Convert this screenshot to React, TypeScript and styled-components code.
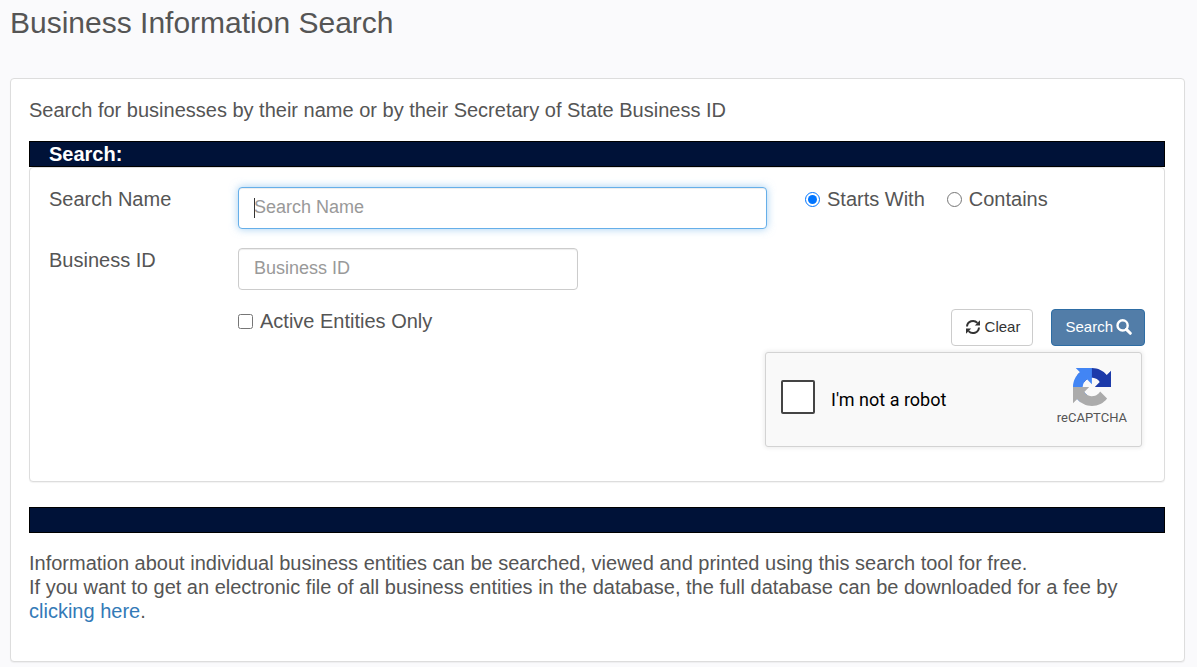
import React, { useState } from "react";
import styled, { createGlobalStyle, css } from "styled-components";

const GlobalStyle = createGlobalStyle`
  *, *::before, *::after { box-sizing: border-box; }
  body {
    margin: 0;
    background: #fafafc;
    color: #555;
    font-family: "Liberation Sans", Arial, Helvetica, sans-serif;
    font-size: 20px;
    line-height: 24px;
  }
`;

const Page = styled.main`
  padding: 5px 12px 5px 10px;
`;

const Title = styled.h1`
  margin: 0 0 37px;
  font-size: 30px;
  line-height: 36px;
  font-weight: 400;
`;

const panel = css`
  background: #fff;
  border: 1px solid #ddd;
  border-radius: 4px;
  box-shadow: 0 1px 1px rgba(0, 0, 0, 0.05);
`;

const Card = styled.section`
  ${panel}
  padding: 19px 19px 38px 18px;
`;

const Text = styled.p`
  margin: 0;
`;

const Bar = styled.h2`
  margin: 0;
  height: 26px;
  padding: 0 19px;
  background: #001238;
  border: 1px solid #000;
  color: #fff;
  font-size: 20px;
  line-height: 24px;
`;

const Intro = styled(Text)`
  margin-bottom: 19px;
`;

const SearchForm = styled.form`
  ${panel}
  margin-bottom: 25px;
  padding: 19px 19px 34px;
`;

const Row = styled.div`
  display: grid;
  grid-template-columns: repeat(12, 1fr);
  column-gap: 38px;
  margin-bottom: 19px;
`;

const FieldLabel = styled.label`
  grid-column: span 2;
`;

const Field = styled.div<{ $span: number }>`
  grid-column: span ${(p) => p.$span};
  position: relative;
`;

const TextInput = styled.input<{ $active?: boolean }>`
  display: block;
  width: 100%;
  height: 42px;
  padding: 0 15px 2px;
  border: 1px solid ${(p) => (p.$active ? "#66afe9" : "#ccc")};
  border-radius: 4px;
  outline: 0;
  background: #fff;
  box-shadow: inset 0 1px 1px rgba(0, 0, 0, 0.075)${(p) => (p.$active ? ", 0 0 8px rgba(102, 175, 233, 0.6)" : "")};
  color: #555;
  font: 18px "Liberation Sans", Arial, sans-serif;
  &::placeholder { color: #999; opacity: 1; }
`;

const Caret = styled.span`
  position: absolute;
  left: 16px;
  top: 11px;
  width: 1px;
  height: 20px;
  background: #333;
`;

const Choices = styled.div`
  grid-column: span 4;
  display: flex;
  align-items: flex-start;
  gap: 22px;
`;

const Choice = styled.label`
  display: flex;
  align-items: center;
  gap: 7px;
  white-space: nowrap;
  input {
    width: 15px;
    height: 15px;
    margin: 1px 0 0;
  }
`;

const Actions = styled.div`
  display: flex;
  justify-content: space-between;
  align-items: flex-start;
  padding-left: 189px;
  margin-bottom: 6px;
`;

const ButtonGroup = styled.div`
  display: flex;
  gap: 18px;
`;

const Button = styled.button<{ $primary?: boolean }>`
  display: flex;
  align-items: center;
  gap: ${(p) => (p.$primary ? 3 : 4)}px;
  height: 37px;
  padding: 0 12px 2px 13px;
  border: 1px solid ${(p) => (p.$primary ? "#2e6da4" : "#ccc")};
  border-radius: 4px;
  background: ${(p) => (p.$primary ? "#527da8" : "#fff")};
  color: ${(p) => (p.$primary ? "#fff" : "#333")};
  font: 15px "Liberation Sans", Arial, sans-serif;
`;

const Captcha = styled.div`
  display: flex;
  align-items: center;
  width: 377px;
  height: 95px;
  margin: 0 3px 0 auto;
  padding: 0 14px 0 15px;
  border: 1px solid #d3d3d3;
  border-radius: 3px;
  background: #f9f9f9;
  box-shadow: 0 0 4px 1px rgba(0, 0, 0, 0.08);
  color: #000;
  font: 18px/24px Roboto, sans-serif;
`;

const RobotLabel = styled.label`
  display: flex;
  align-items: center;
  gap: 16px;
  flex: 1;
  padding-bottom: 6px;
  span { padding-top: 6px; }
`;

const RobotBox = styled.input`
  appearance: none;
  width: 34px;
  height: 34px;
  margin: 0;
  border: 2px solid #444;
  border-radius: 2px;
  background: #fff;
`;

const Brand = styled.div`
  display: flex;
  flex-direction: column;
  align-items: center;
  gap: 2px;
  padding-bottom: 4px;
  color: #555;
  font-size: 13px;
  line-height: 20px;
`;

const Info = styled(Text)`
  margin-top: 18px;
`;

const Link = styled.a`
  color: #337ab7;
  text-decoration: none;
`;

function RefreshIcon() {
  return (
    <svg width="16" height="16" viewBox="0 0 16 16" fill="none" stroke="currentColor" strokeWidth="2" aria-hidden="true">
      <path d="M2 7.5A6 6 0 0 1 12.4 3.9" />
      <path d="M14 8.5A6 6 0 0 1 3.6 12.1" />
      <path d="M15 1.2v5.2H9.8z" fill="currentColor" stroke="none" />
      <path d="M1 14.8V9.6h5.2z" fill="currentColor" stroke="none" />
    </svg>
  );
}

function SearchIcon() {
  return (
    <svg width="16" height="16" viewBox="0 0 16 16" fill="none" stroke="currentColor" aria-hidden="true">
      <circle cx="6.6" cy="6.4" r="5.1" strokeWidth="2.4" />
      <path d="M10.4 10.4l3.9 3.9" strokeWidth="3" strokeLinecap="round" />
    </svg>
  );
}

function RecaptchaLogo() {
  return (
    <svg width="38" height="38" viewBox="0 0 64 64" aria-hidden="true">
      <path fill="#1c3aa9" d="M64 31.955l-.033-1.37V4.687l-7.16 7.16C50.948 4.674 42.033.093 32.05.093c-10.4 0-19.622 4.96-25.458 12.64l11.736 11.86a15.55 15.55 0 0 1 4.754-5.334c2.05-1.6 4.952-2.906 8.968-2.906.485 0 .86.057 1.135.163 4.976.393 9.288 3.14 11.828 7.124l-8.307 8.307L64 31.953" />
      <path fill="#4285f4" d="M31.862.094l-1.37.033H4.594l7.16 7.16C4.58 13.147 0 22.06 0 32.046c0 10.4 4.96 19.622 12.64 25.458L24.5 45.768a15.55 15.55 0 0 1-5.334-4.754c-1.6-2.05-2.906-4.952-2.906-8.968 0-.485.057-.86.163-1.135.393-4.976 3.14-9.288 7.124-11.828l8.307 8.307L31.86.095" />
      <path fill="#ababab" d="M.001 32.045l.033 1.37v25.898l7.16-7.16c5.86 7.173 14.774 11.754 24.76 11.754 10.4 0 19.622-4.96 25.458-12.64l-11.736-11.86a15.55 15.55 0 0 1-4.754 5.334c-2.05 1.6-4.952 2.906-8.968 2.906-.485 0-.86-.057-1.135-.163-4.976-.393-9.288-3.14-11.828-7.124l8.307-8.307c-10.522.04-22.4.066-27.295-.005" />
    </svg>
  );
}

export default function App() {
  const [mode, setMode] = useState("starts");
  const [name, setName] = useState("");
  return (
    <>
      <GlobalStyle />
      <Page>
        <Title>Business Information Search</Title>
        <Card>
          <Intro>Search for businesses by their name or by their Secretary of State Business ID</Intro>
          <Bar>Search:</Bar>
          <SearchForm onSubmit={(e) => e.preventDefault()} onReset={() => setName("")}>
            <Row>
              <FieldLabel htmlFor="name">Search Name</FieldLabel>
              <Field $span={6}>
                <TextInput id="name" $active placeholder="Search Name" value={name} onChange={(e) => setName(e.target.value)} />
                {name === "" && <Caret />}
              </Field>
              <Choices>
                <Choice>
                  <input type="radio" name="mode" checked={mode === "starts"} onChange={() => setMode("starts")} />
                  Starts With
                </Choice>
                <Choice>
                  <input type="radio" name="mode" checked={mode === "contains"} onChange={() => setMode("contains")} />
                  Contains
                </Choice>
              </Choices>
            </Row>
            <Row>
              <FieldLabel htmlFor="business-id">Business ID</FieldLabel>
              <Field $span={4}>
                <TextInput id="business-id" placeholder="Business ID" />
              </Field>
            </Row>
            <Actions>
              <Choice>
                <input type="checkbox" />
                Active Entities Only
              </Choice>
              <ButtonGroup>
                <Button type="reset"><RefreshIcon />Clear</Button>
                <Button type="submit" $primary>Search<SearchIcon /></Button>
              </ButtonGroup>
            </Actions>
            <Captcha>
              <RobotLabel>
                <RobotBox type="checkbox" />
                <span>I'm not a robot</span>
              </RobotLabel>
              <Brand>
                <RecaptchaLogo />
                reCAPTCHA
              </Brand>
            </Captcha>
          </SearchForm>
          <Bar as="div" />
          <Info>
            Information about individual business entities can be searched, viewed and printed using this search tool for free.
            <br />
            If you want to get an electronic file of all business entities in the database, the full database can be downloaded for a fee by{" "}
            <Link href="#download">clicking here</Link>.
          </Info>
        </Card>
      </Page>
    </>
  );
}
